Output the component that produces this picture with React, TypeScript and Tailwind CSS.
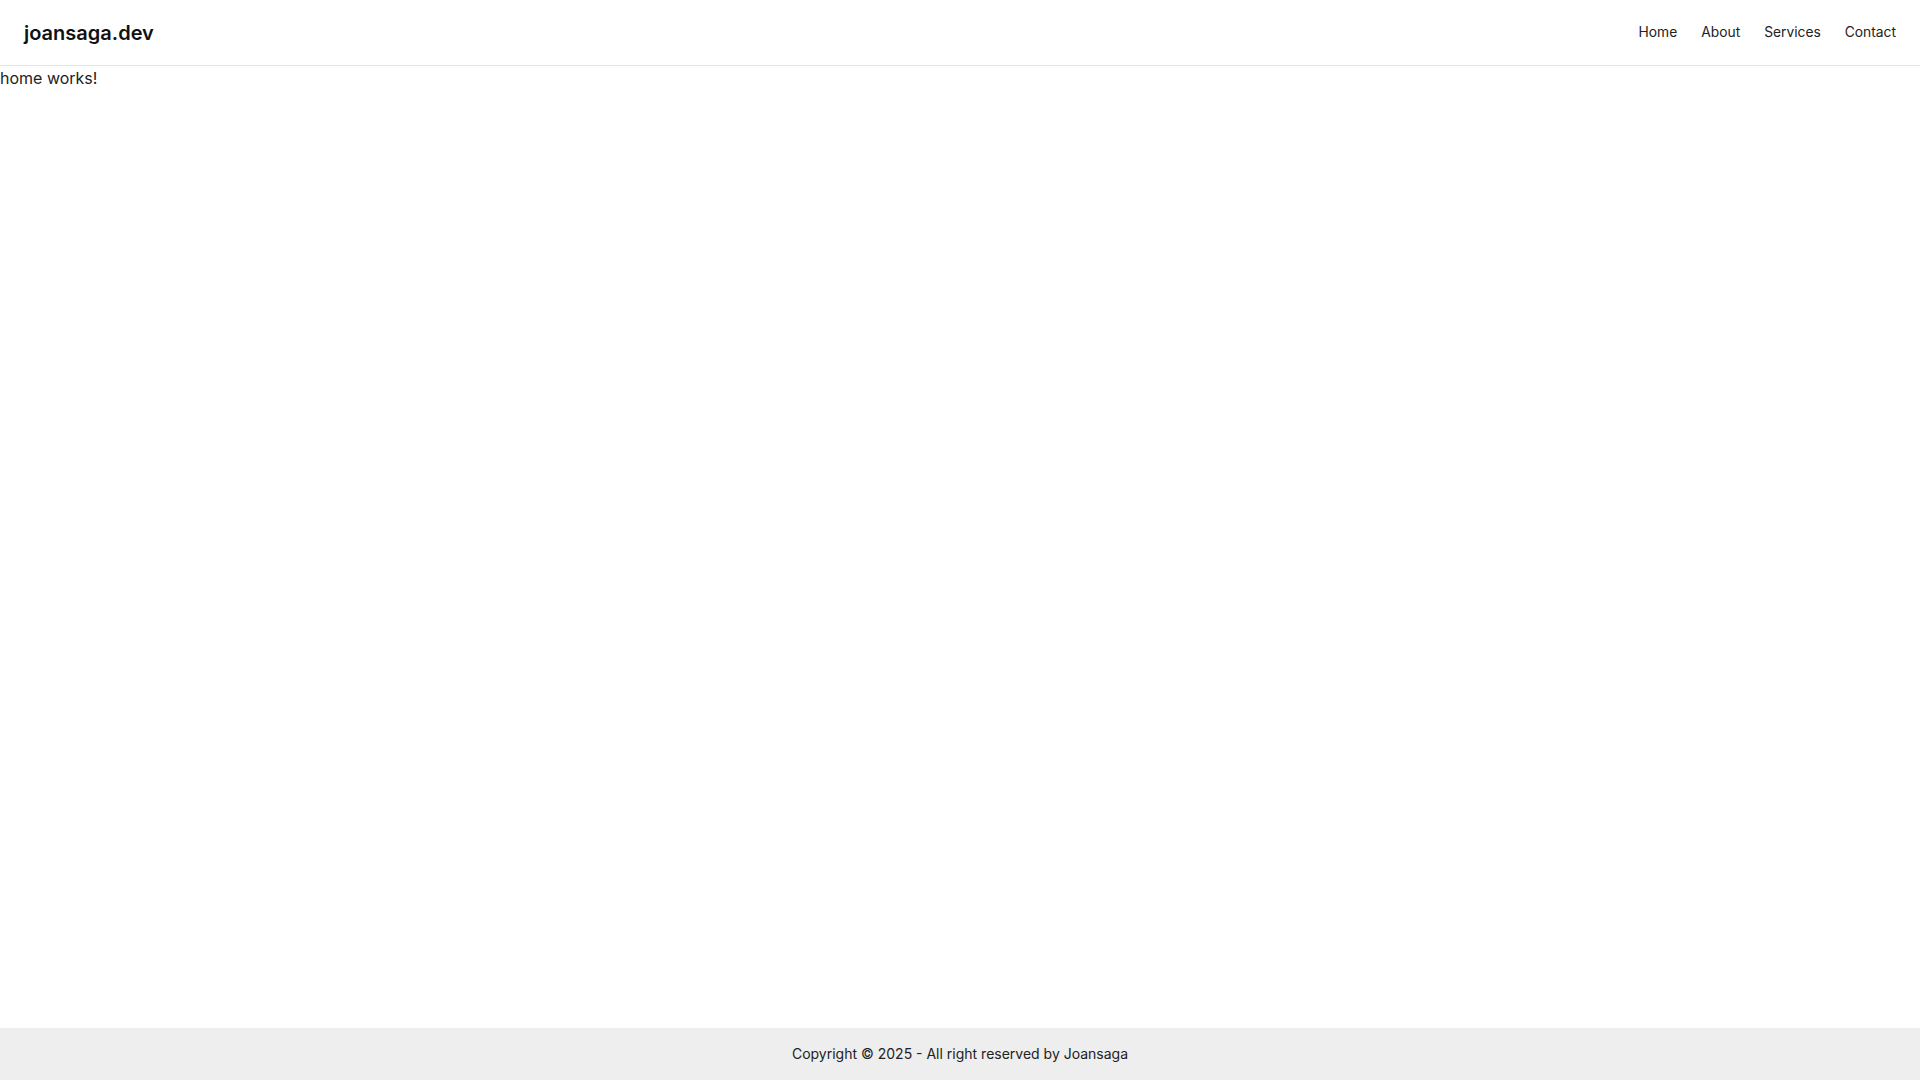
export default function App() {
  return (
    <div className="flex min-h-screen flex-col bg-white font-['Inter',sans-serif] text-[#222]">
      <header className="flex h-[66px] items-center justify-between border-b border-[#e5e5e5] px-6">
        <a href="/" className="text-xl font-semibold text-[#111]">joansaga.dev</a>
        <nav className="flex gap-6 text-[13.8px] text-[#222]">
          <a href="/">Home</a>
          <a href="/about">About</a>
          <a href="/services">Services</a>
          <a href="/contact">Contact</a>
        </nav>
      </header>

      <main className="flex-1">
        <p>home works!</p>
      </main>

      <footer className="bg-[#eeeeee] py-4 text-center text-sm text-[#222]">
        Copyright © 2025 - All right reserved by Joansaga
      </footer>
    </div>
  );
}
